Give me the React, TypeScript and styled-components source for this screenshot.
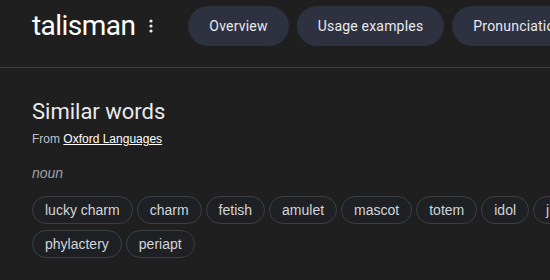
import React from "react";
import styled, { createGlobalStyle } from "styled-components";

const Global = createGlobalStyle`
  html, body {
    margin: 0;
    padding: 0;
    background: #1f1f1f;
    overflow: hidden;
  }
  body {
    font-family: Roboto, "Liberation Sans", Arial, sans-serif;
    color: #e3e3e3;
  }
`;

const Page = styled.div`
  width: 700px;
  min-height: 280px;
  background: #1f1f1f;
`;

const Header = styled.header`
  display: flex;
  align-items: center;
  padding: 6px 0 21px 32px;
  border-bottom: 1px solid #3c4043;
  white-space: nowrap;
`;

const Title = styled.h1`
  margin: 0;
  font-family: Roboto, "Liberation Sans", sans-serif;
  font-weight: 400;
  font-size: 28px;
  line-height: 36px;
  color: #ffffff;
  letter-spacing: -0.55px;
`;

const MoreButton = styled.span`
  display: flex;
  align-items: center;
  justify-content: center;
  margin-left: 14px;
  width: 8px;
  height: 20px;
  color: #e8eaed;
`;

const Tabs = styled.nav`
  display: flex;
  gap: 8px;
  margin-left: 35px;
`;

const Tab = styled.div`
  display: flex;
  align-items: center;
  height: 40px;
  padding: 0 21px;
  border-radius: 20px;
  background: #2e3140;
  color: #e8eaed;
  font-family: Roboto, "Liberation Sans", sans-serif;
  font-size: 14px;
  letter-spacing: 0.2px;
  flex-shrink: 0;
`;

const Content = styled.section`
  padding: 30px 0 0 32px;
  width: 620px;
`;

const Heading = styled.h2`
  margin: 0;
  font-family: Roboto, "Liberation Sans", sans-serif;
  font-weight: 400;
  font-size: 22px;
  line-height: 28px;
  color: #e8eaed;
`;

const Source = styled.div`
  margin-top: 5px;
  font-family: "Liberation Sans", Arial, sans-serif;
  font-size: 12px;
  line-height: 16px;
  color: #bdc1c6;
`;

const SourceLink = styled.a`
  color: #ffffff;
  text-decoration: underline;
`;

const PartOfSpeech = styled.div`
  margin-top: 16px;
  font-family: "Liberation Sans", Arial, sans-serif;
  font-style: italic;
  font-size: 14px;
  line-height: 20px;
  color: #9aa0a6;
`;

const Chips = styled.div`
  display: flex;
  flex-wrap: wrap;
  gap: 6px 4px;
  margin-top: 13px;
`;

const Chip = styled.span`
  display: inline-flex;
  align-items: center;
  height: 26px;
  padding: 0 12px;
  border: 1px solid #3c4043;
  border-radius: 14px;
  background: #1f2023;
  font-family: "Liberation Sans", Arial, sans-serif;
  font-size: 14px;
  color: #d2d5da;
`;

const words = [
  "lucky charm",
  "charm",
  "fetish",
  "amulet",
  "mascot",
  "totem",
  "idol",
  "juju",
  "phylactery",
  "periapt",
];

export default function App() {
  return (
    <Page>
      <Global />
      <Header>
        <Title>talisman</Title>
        <MoreButton>
          <svg width="4" height="14" viewBox="0 0 4 14" fill="currentColor">
            <circle cx="2" cy="2" r="1.6" />
            <circle cx="2" cy="7" r="1.6" />
            <circle cx="2" cy="12" r="1.6" />
          </svg>
        </MoreButton>
        <Tabs>
          <Tab>Overview</Tab>
          <Tab>Usage examples</Tab>
          <Tab>Pronunciation</Tab>
          <Tab>Translations</Tab>
        </Tabs>
      </Header>
      <Content>
        <Heading>Similar words</Heading>
        <Source>
          From <SourceLink href="#">Oxford Languages</SourceLink>
        </Source>
        <PartOfSpeech>noun</PartOfSpeech>
        <Chips>
          {words.map((w) => (
            <Chip key={w}>{w}</Chip>
          ))}
        </Chips>
      </Content>
    </Page>
  );
}
